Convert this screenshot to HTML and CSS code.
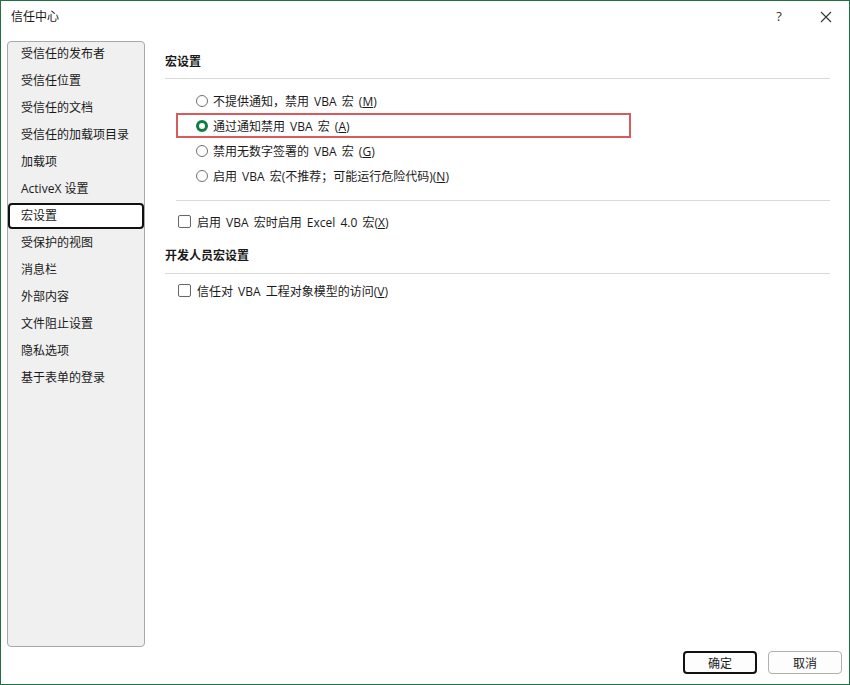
FILE: index.html
```html
<!DOCTYPE html>
<html lang="zh-CN">
<head>
<meta charset="utf-8">
<title>信任中心</title>
<link rel="stylesheet" href="styles.css">
</head>
<body>
<div class="window">
  <div class="titlebar">
    <span class="title">信任中心</span>
    <span class="help">?</span>
    <span class="close"><svg width="12" height="12" viewBox="0 0 12 12"><path d="M1 1L11 11M11 1L1 11" stroke="#333" stroke-width="1.1" fill="none"/></svg></span>
  </div>
  <div class="main">
    <nav class="sidebar">
      <div class="item">受信任的发布者</div>
      <div class="item">受信任位置</div>
      <div class="item">受信任的文档</div>
      <div class="item">受信任的加载项目录</div>
      <div class="item">加载项</div>
      <div class="item">ActiveX 设置</div>
      <div class="item selected">宏设置</div>
      <div class="item">受保护的视图</div>
      <div class="item">消息栏</div>
      <div class="item">外部内容</div>
      <div class="item">文件阻止设置</div>
      <div class="item">隐私选项</div>
      <div class="item">基于表单的登录</div>
    </nav>
    <section class="content">
      <div class="heading">宏设置</div>
      <div class="radios">
        <div class="row"><span class="radio"></span><span>不提供通知，禁用 VBA 宏 (<u>M</u>)</span></div>
        <div class="row highlighted"><span class="radio checked"></span><span>通过通知禁用 VBA 宏 (<u>A</u>)</span></div>
        <div class="row"><span class="radio"></span><span>禁用无数字签署的 VBA 宏 (<u>G</u>)</span></div>
        <div class="row"><span class="radio"></span><span>启用 VBA 宏(不推荐；可能运行危险代码)(<u>N</u>)</span></div>
      </div>
      <div class="subsep"></div>
      <div class="check-row indent"><span class="checkbox"></span><span>启用 VBA 宏时启用 Excel 4.0 宏(<u>X</u>)</span></div>
      <div class="heading second">开发人员宏设置</div>
      <div class="check-row indent"><span class="checkbox"></span><span>信任对 VBA 工程对象模型的访问(<u>V</u>)</span></div>
    </section>
  </div>
  <div class="footer">
    <button class="btn primary">确定</button>
    <button class="btn">取消</button>
  </div>
</div>
</body>
</html>
```
FILE: styles.css
```css
* { box-sizing: border-box; }
html, body { margin: 0; padding: 0; background: #fff; }
body {
  font-family: "Open Sans", "Noto Sans CJK SC", sans-serif;
  font-size: 12px;
  color: #1a1a1a;
}
.window {
  width: 850px;
  height: 685px;
  border: 1px solid #1e7145;
  display: flex;
  flex-direction: column;
  background: #fff;
}
.titlebar {
  height: 40px;
  display: flex;
  align-items: flex-start;
  padding-top: 7px;
}
.title { margin-left: 10px; font-size: 12px; line-height: 17px; }
.help { margin-left: auto; width: 12px; text-align: center; font-size: 13px; line-height: 17px; color: #333; }
.close { margin-left: 35px; margin-right: 17px; width: 12px; height: 17px; display: flex; align-items: center; }
.main { display: flex; flex: 1; min-height: 0; padding-left: 6px; }
.sidebar {
  width: 138px;
  height: 606px;
  background: #f0f0f0;
  border: 1px solid #a8a8a8;
  border-radius: 4px;
  display: flex;
  flex-direction: column;
  gap: 1px;
}
.item {
  height: 26px;
  line-height: 22px;
  padding-left: 11px;
  white-space: nowrap;
  border: 2px solid transparent;
  border-radius: 4px;
}
.item:first-child { margin-top: -1px; }
.item.selected { border-color: #111; background: #fff; }
.content { flex: 1; padding-left: 20px; padding-right: 19px; }
.heading {
  font-weight: bold;
  height: 38px;
  padding-top: 12px;
  line-height: 17px;
  border-bottom: 1px solid #d9d9d9;
}
.heading.second { height: 33px; padding-top: 6px; margin-top: 8px; }
.radios { margin-left: 11px; padding-top: 9px; word-spacing: 2px; }
.row {
  width: 455px;
  height: 25px;
  border: 2px solid transparent;
  display: flex;
  align-items: center;
  padding-left: 18px;
  white-space: nowrap;
}
.row.highlighted { border-color: #d95b5b; }
.radio {
  width: 12px;
  height: 12px;
  border: 1px solid #707070;
  border-radius: 50%;
  margin-right: 5px;
  flex: none;
}
.radio.checked {
  border: 3px solid #107c41;
  background: #fff;
}
.subsep { margin-left: 11px; margin-top: 12px; border-top: 1px solid #d9d9d9; height: 0; }
.check-row {
  display: flex;
  align-items: center;
  height: 23px;
  margin-top: 9px;
  white-space: nowrap;
  word-spacing: 2px;
}
.indent { padding-left: 13px; }
.checkbox {
  width: 13px;
  height: 13px;
  border: 1px solid #666;
  border-radius: 2px;
  margin-right: 6px;
  flex: none;
}
.heading.second + .check-row { margin-top: 5px; }
u { text-decoration: underline; text-underline-offset: 1px; }
.footer {
  height: 38px;
  display: flex;
  justify-content: flex-end;
  gap: 11px;
  padding: 5px 7px 10px 0;
}
.btn {
  width: 74px;
  height: 23px;
  font-family: inherit;
  font-size: 12px;
  color: #1a1a1a;
  background: #fdfdfd;
  border: 1px solid #b0b0b0;
  border-radius: 4px;
  padding: 0;
}
.btn.primary { border: 2px solid #111; }
```
